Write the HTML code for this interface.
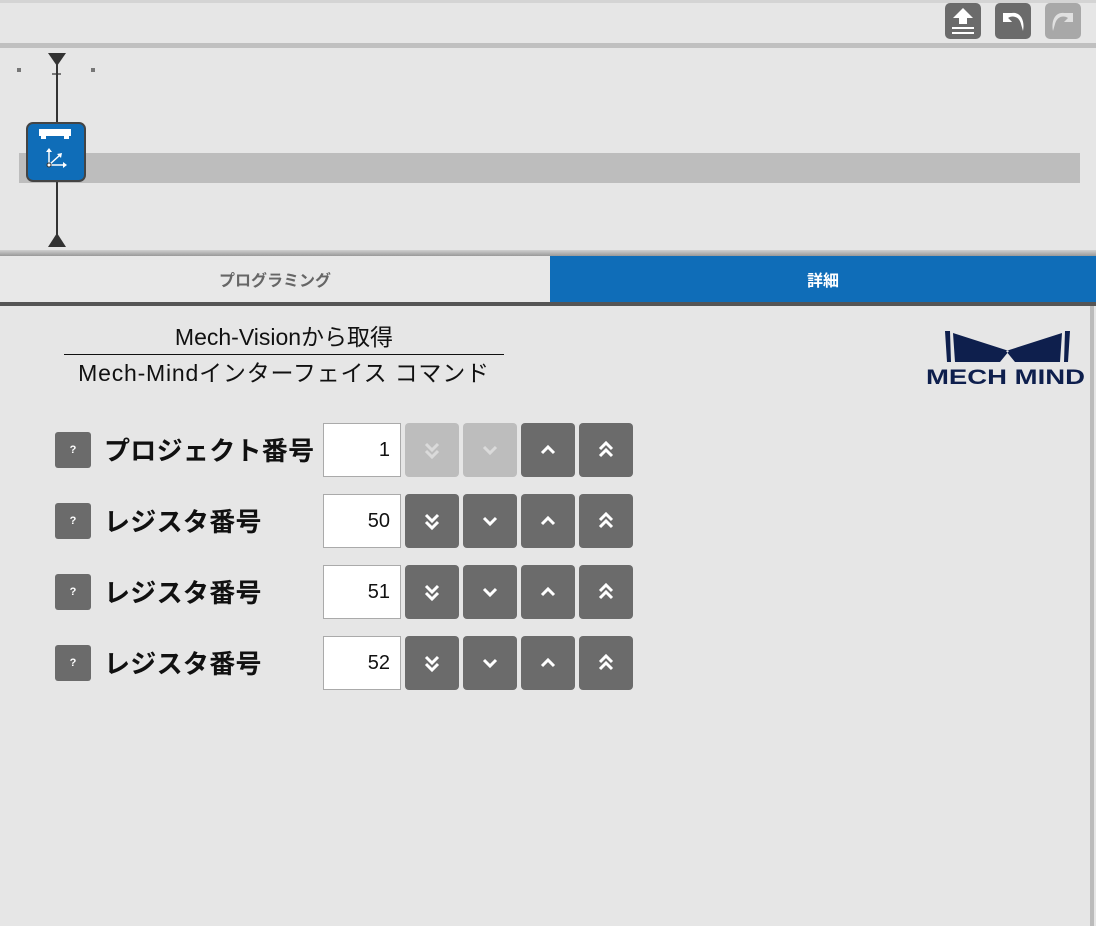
<!DOCTYPE html>
<html><head><meta charset="utf-8"><style>
*{margin:0;padding:0;box-sizing:border-box}
body{width:1096px;height:926px;background:#e6e6e6;font-family:"Liberation Sans","Noto Sans CJK JP",sans-serif;position:relative;overflow:hidden}
.a{position:absolute}
.tb{width:36px;height:36px;border-radius:5px;background:#6b6b6b}
.help{left:55px;width:36px;height:36px;background:#6b6b6b;border-radius:3px;color:#fff;font-size:11px;font-weight:bold;text-align:center;line-height:36px}
.lbl{left:104px;font-size:26px;font-weight:bold;color:#111;font-family:"Noto Sans CJK JP",sans-serif;line-height:54px;letter-spacing:0.3px}
.inp{left:323px;width:78px;height:54px;background:#fff;border:1px solid #aaa;text-align:right;padding-right:10px;font-size:20px;line-height:52px;color:#111}
.btn{width:54px;height:54px;background:#6b6b6b;border-radius:4px}
.btn.dis{background:#bdbdbd}
.btn svg{position:absolute;left:17px;top:17px}
</style></head><body>
<div class="a" style="left:0;top:0;width:1096px;height:3px;background:#d4d4d4"></div>
<div class="a tb" style="left:945px;top:3px"><svg width="36" height="36"><path d="M18 5 L28 15 L22 15 L22 21 L14 21 L14 15 L8 15Z" fill="#fff"/><rect x="7" y="24" width="22" height="2" fill="#fff"/><rect x="7" y="29" width="22" height="2" fill="#fff"/></svg></div>
<div class="a tb" style="left:995px;top:3px"><svg width="36" height="36"><path d="M8 10 L8 19 L17 19 L13 15 C17 12 24 13 26 21 L28 28 C30 18 26 9 17 10 L12 10 Z" fill="#fff"/><path d="M8 10 L8 19 L17 19Z" fill="#fff"/></svg></div>
<div class="a tb" style="left:1045px;top:3px;background:#a8a8a8"><svg width="36" height="36"><path d="M28 10 L28 19 L19 19 L23 15 C19 12 12 13 10 21 L8 28 C6 18 10 9 19 10 L24 10 Z" fill="#e0e0e0"/></svg></div>
<div class="a" style="left:0;top:43px;width:1096px;height:5px;background:#c0c0c0"></div>
<div class="a" style="left:17px;top:68px;width:4px;height:4px;background:#777"></div>
<div class="a" style="left:91px;top:68px;width:4px;height:4px;background:#777"></div>
<div class="a" style="left:52px;top:73px;width:9px;height:2px;background:#777"></div>
<div class="a" style="left:19px;top:153px;width:1061px;height:30px;background:#bdbdbd"></div>
<div class="a" style="left:56px;top:55px;width:2px;height:185px;background:#333"></div>
<svg class="a" style="left:48px;top:53px" width="18" height="14"><path d="M0 0 L18 0 L9 13Z" fill="#333"/></svg>
<svg class="a" style="left:48px;top:233px" width="18" height="14"><path d="M9 0 L18 14 L0 14Z" fill="#333"/></svg>
<div class="a" style="left:26px;top:122px;width:60px;height:60px;background:#0f6db8;border:2px solid #444;border-radius:7px">
<svg width="56" height="56"><rect x="11" y="5" width="32" height="7" fill="#fff"/><rect x="13" y="12" width="5" height="3" fill="#fff"/><rect x="36" y="12" width="5" height="3" fill="#fff"/>
<g stroke="#fff" stroke-width="1.5" fill="none"><path d="M21 41 L21 26"/><path d="M21 41 L37 41"/><path d="M21 41 L32 31"/></g>
<g fill="#fff"><path d="M21 24 L18 28 L24 28Z"/><path d="M39 41 L35 38 L35 44Z"/><path d="M34 29 L29 30 L33 34Z"/></g><circle cx="21" cy="41" r="2" fill="#fff" stroke="#333"/></svg></div>
<div class="a" style="left:0;top:250px;width:1096px;height:6px;background:linear-gradient(#d0d0d0,#999)"></div>
<div class="a" style="left:0;top:256px;width:550px;height:46px;background:#e8e8e8;color:#666;font-weight:bold;font-size:16px;text-align:center;line-height:46px;font-family:'Noto Sans CJK JP',sans-serif">プログラミング</div>
<div class="a" style="left:550px;top:256px;width:546px;height:46px;background:#0f6db8;color:#fff;font-weight:bold;font-size:16px;text-align:center;line-height:46px;font-family:'Noto Sans CJK JP',sans-serif">詳細</div>
<div class="a" style="left:0;top:302px;width:1096px;height:4px;background:#555"></div>
<div class="a" style="left:1090px;top:306px;width:4px;height:620px;background:#bbb"></div>
<div class="a" style="left:44px;top:322px;width:480px;text-align:center;font-size:23px;color:#111;line-height:30px">Mech-Visionから取得</div>
<div class="a" style="left:64px;top:354px;width:440px;height:1px;background:#111"></div>
<div class="a" style="left:44px;top:358px;width:480px;text-align:center;font-size:23px;color:#111;line-height:30px;letter-spacing:0.8px">Mech-Mindインターフェイス コマンド</div>
<svg class="a" style="left:925px;top:328px" width="162" height="60"><path d="M20 3 L25 3 L26 34 L22 34Z M28 5 L84 23 L75 34 L30 34Z M145 3 L140 3 L139 34 L143 34Z M137 5 L81 23 L90 34 L135 34Z" fill="#0e1f4d"/>
<text x="1" y="56" textLength="159" lengthAdjust="spacingAndGlyphs" font-family="Liberation Sans,sans-serif" font-weight="bold" font-size="21" fill="#0e1f4d">MECH MIND</text></svg>

<div class="a help" style="top:432px">?</div><div class="a lbl" style="top:423px">プロジェクト番号</div><div class="a inp" style="top:423px">1</div>
<div class="a help" style="top:503px">?</div><div class="a lbl" style="top:494px">レジスタ番号</div><div class="a inp" style="top:494px">50</div>
<div class="a help" style="top:574px">?</div><div class="a lbl" style="top:565px">レジスタ番号</div><div class="a inp" style="top:565px">51</div>
<div class="a help" style="top:645px">?</div><div class="a lbl" style="top:636px">レジスタ番号</div><div class="a inp" style="top:636px">52</div>

<div id="btns"></div>
<script>
var dd='<path d="M4 4 L10 10 L16 4 M4 11 L10 17 L16 11" stroke="#fff" stroke-width="3" fill="none"/>';
var d='<path d="M4 7 L10 13 L16 7" stroke="#fff" stroke-width="3" fill="none"/>';
var u='<path d="M4 13 L10 7 L16 13" stroke="#fff" stroke-width="3" fill="none"/>';
var uu='<path d="M4 9 L10 3 L16 9 M4 16 L10 10 L16 16" stroke="#fff" stroke-width="3" fill="none"/>';
var icons=[dd,d,u,uu],xs=[405,463,521,579],h='';
for(var r=0;r<4;r++)for(var i=0;i<4;i++){var dis=(r==0&&i<2);
h+='<div class="a btn'+(dis?' dis':'')+'" style="left:'+xs[i]+'px;top:'+(423+71*r)+'px"><svg width="20" height="20" style="opacity:'+(dis?0.45:1)+'">'+icons[i]+'</svg></div>';}
document.getElementById('btns').innerHTML=h;
</script>
</body></html>
